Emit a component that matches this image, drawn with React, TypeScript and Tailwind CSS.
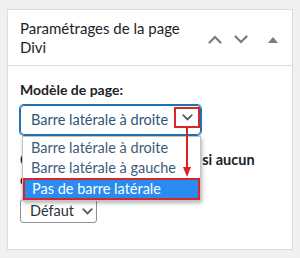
import React from "react";

const Chevron = ({ dir, className }: { dir: "up" | "down"; className?: string }) => (
	<svg viewBox="0 0 14 9" className={className} fill="none" stroke="currentColor" strokeWidth="2.2" strokeLinecap="round">
		{dir === "up" ? <path d="M1.5 7.5 7 2l5.5 5.5" /> : <path d="M1.5 1.5 7 7l5.5-5.5" />}
	</svg>
);

export default function App() {
	return (
		<div className="h-[258px] w-[300px] bg-[#f0f0f1] pt-[9px] pl-[7px] font-['Lato',sans-serif] text-[#1d2327]">
			<div className="h-[241px] w-[286px] border border-[#dcdcde] bg-white">
				<div className="flex h-[56px] items-center justify-between border-b border-[#dcdcde] pl-[12px] pr-[14px]">
					<h2 className="w-[180px] text-[15px] leading-[19px]">Paramétrages de la page Divi</h2>
					<div className="mt-[4px] flex items-center text-[#787c82]">
						<Chevron dir="up" className="h-[9px] w-[14px]" />
						<Chevron dir="down" className="ml-[12px] h-[9px] w-[14px]" />
						<svg viewBox="0 0 10 6" className="ml-[20px] h-[6px] w-[10px]" fill="currentColor">
							<path d="M5 0 10 6H0z" />
						</svg>
					</div>
				</div>
				<div className="relative px-[12px] pt-[14px]">
					<p className="text-[14px] leading-[19px] font-bold">Modèle de page:</p>
					<div className="relative mt-[6px] w-[181px]">
						<div className="flex h-[30px] items-center rounded-[4px] border border-[#2271b1] pl-[10px] text-[14.5px] text-[#2d5578] shadow-[0_0_0_1px_#2271b1]">
							Barre latérale à droite
						</div>
						<div className="absolute top-[2px] right-[1px] flex h-[21px] w-[26px] items-center justify-center border-2 border-[#d6262e] text-[#50575e]">
							<Chevron dir="down" className="h-[7px] w-[11px]" />
						</div>
						<div className="absolute top-[23px] left-[166px] z-20 h-[45px] w-[2px] bg-[#e02020]" />
						<svg viewBox="0 0 8 10" className="absolute top-[62px] left-[163px] z-20 h-[10px] w-[8px]" fill="#e02020">
							<path d="M0 0h8L4 10z" />
						</svg>
						<div className="absolute top-[31px] left-[2px] z-10 w-[179px] border border-[#c3c4c7] bg-white pt-[1px] text-[14.5px] leading-[20px] text-[#3d5c78] shadow-[1px_2px_4px_rgba(0,0,0,0.3)]">
							<div className="pl-[8px]">Barre latérale à droite</div>
							<div className="pl-[8px]">Barre latérale à gauche</div>
							<div className="h-[22px] border-2 border-[#d6262e] bg-[#2a8cef] pl-[7px] leading-[18px] text-white">Pas de barre latérale</div>
						</div>
					</div>
					<p className="mt-[15px] text-[14.5px] leading-[20px] font-bold whitespace-nowrap">
						Conteneur en pleine largeur si aucun
						<br />
						contenu défini :
					</p>
					<div className="mt-[9px] flex h-[24px] w-[77px] items-center rounded-[3px] border border-[#8c8f94] pl-[9px] text-[14.5px] text-[#2c3338]">
						Défaut
						<Chevron dir="down" className="ml-[8px] h-[7px] w-[11px] text-[#50575e]" />
					</div>
				</div>
			</div>
		</div>
	);
}
